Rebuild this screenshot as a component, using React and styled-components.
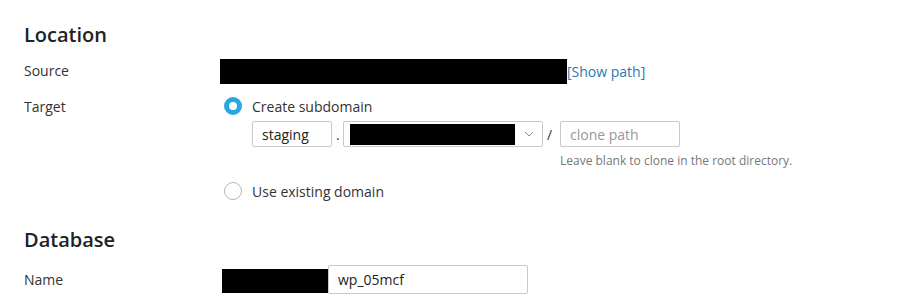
import React from 'react';
import styled, { createGlobalStyle } from 'styled-components';

const GlobalStyle = createGlobalStyle`
  html, body {
    margin: 0;
    padding: 0;
    background: #fff;
  }
  body {
    font-family: "Open Sans", "Liberation Sans", sans-serif;
    font-size: 14px;
    color: #333;
  }
`;

const Page = styled.div`
  padding: 22px 24px 0 24px;
  width: 900px;
  height: 298px;
  box-sizing: border-box;
  overflow: hidden;
`;

const Section = styled.section`
  margin-bottom: ${(p) => p.gap || 0}px;
`;

const Heading = styled.h2`
  margin: 0 0 ${(p) => p.mb || 10}px 0;
  font-size: 20px;
  font-weight: 600;
  color: #222;
  line-height: 26px;
`;

const Row = styled.div`
  display: flex;
  align-items: ${(p) => (p.top ? 'flex-start' : 'center')};
  min-height: ${(p) => p.h || 30}px;
  margin-bottom: ${(p) => p.mb || 0}px;
`;

const Label = styled.div`
  width: 196px;
  flex: none;
  line-height: 22px;
  color: #333;
  padding-top: ${(p) => p.pt || 0}px;
`;

const Value = styled.div`
  display: flex;
  flex-direction: column;
  align-items: flex-start;
`;

const Redacted = styled.div`
  background: #000;
  width: ${(p) => p.w}px;
  height: ${(p) => p.h}px;
  margin-left: ${(p) => p.ml || 0}px;
  margin-top: ${(p) => p.mt || 0}px;
  flex: none;
`;

const PathLink = styled.a`
  color: #2a7ab0;
  font-size: 14px;
  text-decoration: none;
  cursor: pointer;
`;

const RadioRow = styled.label`
  display: flex;
  align-items: center;
  margin-left: 4px;
  margin-top: ${(p) => p.mt || 0}px;
  height: 24px;
  gap: 10px;
  cursor: pointer;
`;

const RadioDot = styled.span`
  width: 18px;
  height: 18px;
  box-sizing: border-box;
  border-radius: 50%;
  flex: none;
  background: #fff;
  border: ${(p) => (p.checked ? '5px solid #28a8e0' : '1px solid #b7b7b7')};
`;

const SubFields = styled.div`
  display: flex;
  flex-direction: column;
  margin-left: 32px;
  margin-top: 3px;
`;

const FieldLine = styled.div`
  display: flex;
  align-items: center;
`;

const Input = styled.div`
  box-sizing: border-box;
  height: ${(p) => p.h || 26}px;
  width: ${(p) => p.w}px;
  border: 1px solid #c9c9c9;
  border-radius: 2px;
  background: #fff;
  padding: 0 9px;
  display: flex;
  align-items: center;
  color: ${(p) => (p.$muted ? '#999' : '#222')};
  font-size: 14px;
`;

const Select = styled.div`
  box-sizing: border-box;
  height: 26px;
  width: 200px;
  border: 1px solid #c9c9c9;
  border-radius: 2px;
  background: #fff;
  padding: 0 8px 0 6px;
  display: flex;
  align-items: center;
  justify-content: space-between;
`;

const Sep = styled.span`
  width: ${(p) => p.w}px;
  padding-left: ${(p) => p.pl || 0}px;
  box-sizing: border-box;
  color: #333;
  flex: none;
`;

const Hint = styled.div`
  margin-left: 308px;
  margin-top: 6px;
  font-size: 12px;
  color: #777;
  line-height: 16px;
`;

const Chevron = () => (
  <svg width="10" height="6" viewBox="0 0 10 6" fill="none">
    <path d="M1 1l4 4 4-4" stroke="#888" strokeWidth="1" />
  </svg>
);

export default function App() {
  return (
    <>
      <GlobalStyle />
      <Page>
        <Section gap={24}>
          <Heading>Location</Heading>
          <Row h={26} mb={10}>
            <Label>Source</Label>
            <Redacted w={347} h={25} />
            <PathLink>[Show path]</PathLink>
          </Row>
          <Row top>
            <Label pt={2}>Target</Label>
            <Value>
              <RadioRow>
                <RadioDot checked />
                <span>Create subdomain</span>
              </RadioRow>
              <SubFields>
                <FieldLine>
                  <Input w={80}>staging</Input>
                  <Sep w={11} pl={4}>.</Sep>
                  <Select>
                    <Redacted w={165} h={21} />
                    <Chevron />
                  </Select>
                  <Sep w={17} pl={4}>/</Sep>
                  <Input w={120} $muted>clone path</Input>
                </FieldLine>
                <Hint>Leave blank to clone in the root directory.</Hint>
              </SubFields>
              <RadioRow mt={10}>
                <RadioDot />
                <span>Use existing domain</span>
              </RadioRow>
            </Value>
          </Row>
        </Section>
        <Section>
          <Heading mb={11}>Database</Heading>
          <Row h={30}>
            <Label pt={2}>Name</Label>
            <Redacted w={106} h={24} ml={2} mt={4} />
            <Input w={200} h={29}>wp_05mcf</Input>
          </Row>
        </Section>
      </Page>
    </>
  );
}
